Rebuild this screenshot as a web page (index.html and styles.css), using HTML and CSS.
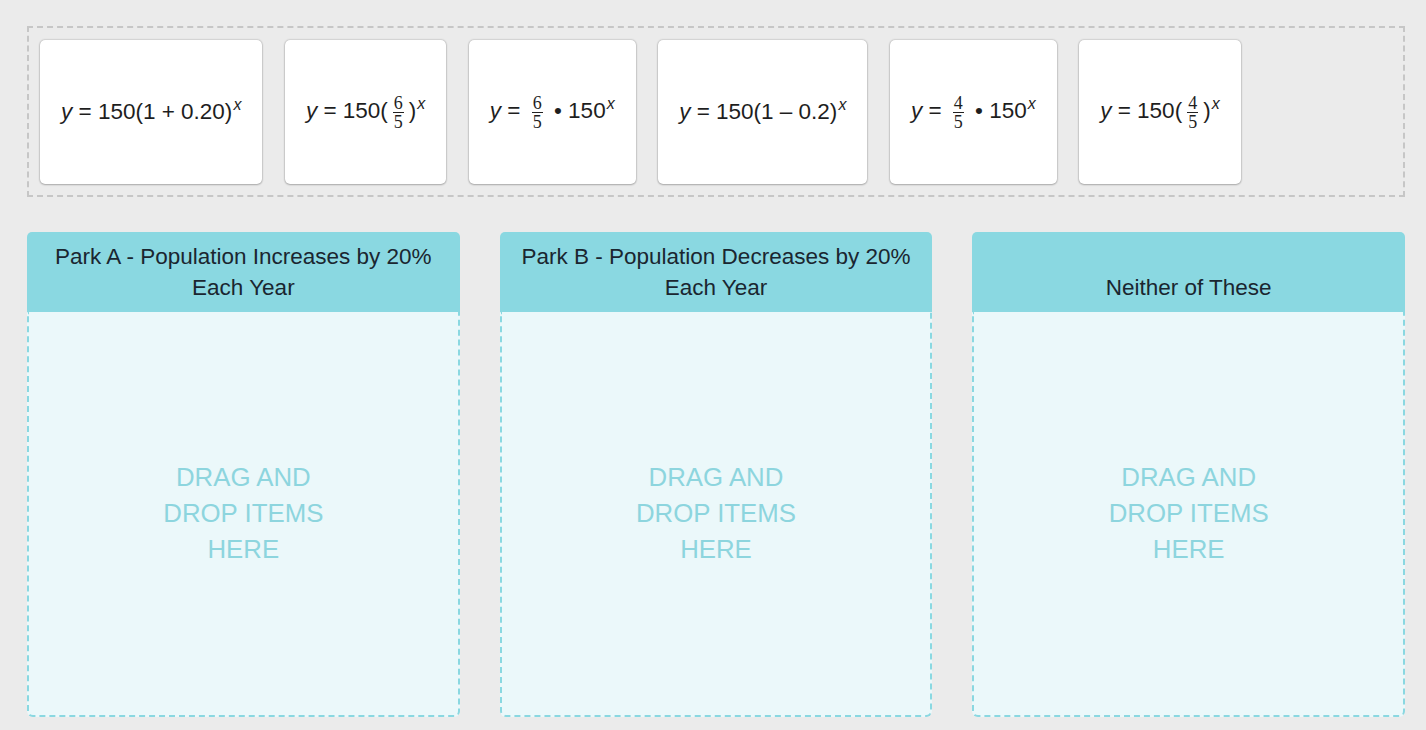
FILE: index.html
```html
<!DOCTYPE html>
<html lang="en">
<head>
<meta charset="utf-8">
<title>Drag and drop</title>
<link rel="stylesheet" href="styles.css">
</head>
<body>
<div class="bank">
  <div class="card"><span class="eq"><i>y</i> = 150(1 + 0.20)<sup class="sx">x</sup></span></div>
  <div class="card"><span class="eq"><i>y</i> = 150(<span class="frac"><span class="num">6</span><span class="den">5</span></span>)<sup class="sx">x</sup></span></div>
  <div class="card"><span class="eq"><i>y</i> = <span class="frac"><span class="num">6</span><span class="den">5</span></span> • 150<sup class="sx">x</sup></span></div>
  <div class="card"><span class="eq"><i>y</i> = 150(1 – 0.2)<sup class="sx">x</sup></span></div>
  <div class="card"><span class="eq"><i>y</i> = <span class="frac"><span class="num">4</span><span class="den">5</span></span> • 150<sup class="sx">x</sup></span></div>
  <div class="card"><span class="eq"><i>y</i> = 150(<span class="frac"><span class="num">4</span><span class="den">5</span></span>)<sup class="sx">x</sup></span></div>
</div>
<div class="columns">
  <div class="col">
    <div class="col-head">Park A - Population Increases by 20% Each Year</div>
    <div class="col-body"><div class="drop">DRAG AND<br>DROP ITEMS<br>HERE</div></div>
  </div>
  <div class="col">
    <div class="col-head">Park B - Population Decreases by 20% Each Year</div>
    <div class="col-body"><div class="drop">DRAG AND<br>DROP ITEMS<br>HERE</div></div>
  </div>
  <div class="col">
    <div class="col-head">Neither of These</div>
    <div class="col-body"><div class="drop">DRAG AND<br>DROP ITEMS<br>HERE</div></div>
  </div>
</div>
</body>
</html>
```

FILE: styles.css
```css
html, body {
  margin: 0;
  height: 100%;
}
body {
  background: #ebebeb;
  font-family: "Liberation Sans", Arial, sans-serif;
  color: #1e1e1e;
  padding: 26px 21px 0 27px;
  box-sizing: border-box;
  overflow: hidden;
}
.bank {
  border: 2px dashed #c6c6c6;
  padding: 12px 11px 11px;
  display: flex;
  gap: 22.5px;
  height: 171px;
  box-sizing: border-box;
}
.card {
  background: #fff;
  border-radius: 5px;
  box-shadow: 0 0 2px rgba(0,0,0,0.35), 0 1px 2px rgba(0,0,0,0.2);
  height: 144px;
  padding: 0 21px;
  display: flex;
  align-items: center;
  justify-content: center;
  box-sizing: border-box;
}
.eq {
  font-size: 22.5px;
  line-height: 30px;
  white-space: nowrap;
}
.eq i {
  font-style: italic;
}
.sx {
  font-style: italic;
  font-size: 16px;
  line-height: 0;
  vertical-align: 9px;
  margin-left: 1px;
}
.frac {
  display: inline-flex;
  flex-direction: column;
  vertical-align: middle;
  font-family: "Liberation Serif", "DejaVu Serif", serif;
  font-size: 18px;
  line-height: 14px;
  text-align: center;
  margin: 0 5px;
}
.num {
  border-bottom: 1px solid #222;
  padding: 0 1px 2px;
}
.den {
  padding-top: 2px;
}
.columns {
  display: grid;
  grid-template-columns: repeat(3, 1fr);
  gap: 40px;
  margin-top: 35px;
}
.col-head {
  background: #8ad8e1;
  border-radius: 5px 5px 0 0;
  height: 80px;
  box-sizing: border-box;
  padding: 9px 10px;
  display: flex;
  flex-direction: column;
  justify-content: flex-end;
  text-align: center;
  font-size: 22.5px;
  line-height: 31px;
  color: #1a2630;
}
.col-body {
  background: #ebf8fa;
  border: 2px dashed #8ad8e1;
  border-top: none;
  border-radius: 0 0 6px 6px;
  height: 405px;
  box-sizing: border-box;
  display: flex;
  align-items: center;
  justify-content: center;
}
.drop {
  font-size: 25.8px;
  line-height: 36px;
  text-align: center;
  color: #8dd5de;
  margin-top: -2px;
}
```
